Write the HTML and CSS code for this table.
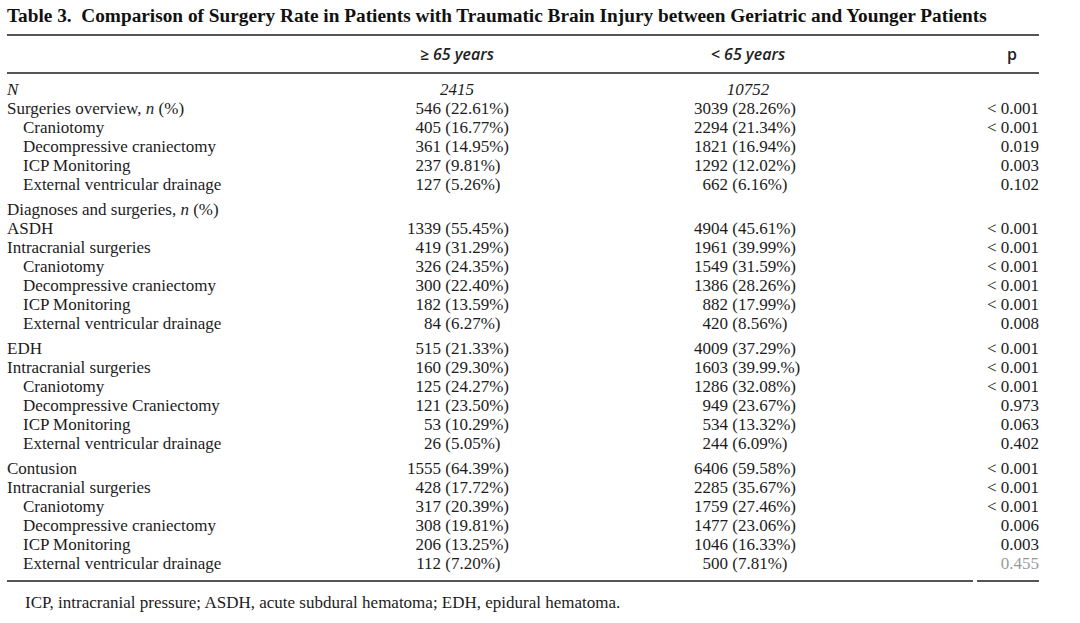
FILE: index.html
```html
<!DOCTYPE html>
<html>
<head>
<meta charset="utf-8">
<link rel="stylesheet" href="styles.css">
</head>
<body>
<div class="page">
  <h1 class="title">Table 3.&nbsp; Comparison of Surgery Rate in Patients with Traumatic Brain Injury between Geriatric and Younger Patients</h1>
  <table class="tbl">
    <colgroup>
      <col class="c-label"><col class="c-old"><col class="c-young"><col class="c-p">
    </colgroup>
    <thead>
      <tr>
        <th></th>
        <th class="hd">&ge; 65 years</th>
        <th class="hd">&lt; 65 years</th>
        <th class="hd-p">p</th>
      </tr>
    </thead>
    <tbody>
      <tr class="first">
        <td class="lbl"><i>N</i></td>
        <td class="ctr"><i>2415</i></td>
        <td class="ctr"><i>10752</i></td>
        <td class="pv"></td>
      </tr>
      <tr><td class="lbl">Surgeries overview, <i>n</i> (%)</td><td class="v1"><span class="n">546</span> (22.61%)</td><td class="v2"><span class="n">3039</span> (28.26%)</td><td class="pv">&lt; 0.001</td></tr>
      <tr><td class="lbl ind">Craniotomy</td><td class="v1"><span class="n">405</span> (16.77%)</td><td class="v2"><span class="n">2294</span> (21.34%)</td><td class="pv">&lt; 0.001</td></tr>
      <tr><td class="lbl ind">Decompressive craniectomy</td><td class="v1"><span class="n">361</span> (14.95%)</td><td class="v2"><span class="n">1821</span> (16.94%)</td><td class="pv">0.019</td></tr>
      <tr><td class="lbl ind">ICP Monitoring</td><td class="v1"><span class="n">237</span> (9.81%)</td><td class="v2"><span class="n">1292</span> (12.02%)</td><td class="pv">0.003</td></tr>
      <tr><td class="lbl ind">External ventricular drainage</td><td class="v1"><span class="n">127</span> (5.26%)</td><td class="v2"><span class="n">662</span> (6.16%)</td><td class="pv">0.102</td></tr>

      <tr class="gs"><td class="lbl">Diagnoses and surgeries, <i>n</i> (%)</td><td></td><td></td><td class="pv"></td></tr>
      <tr><td class="lbl">ASDH</td><td class="v1"><span class="n">1339</span> (55.45%)</td><td class="v2"><span class="n">4904</span> (45.61%)</td><td class="pv">&lt; 0.001</td></tr>
      <tr><td class="lbl">Intracranial surgeries</td><td class="v1"><span class="n">419</span> (31.29%)</td><td class="v2"><span class="n">1961</span> (39.99%)</td><td class="pv">&lt; 0.001</td></tr>
      <tr><td class="lbl ind">Craniotomy</td><td class="v1"><span class="n">326</span> (24.35%)</td><td class="v2"><span class="n">1549</span> (31.59%)</td><td class="pv">&lt; 0.001</td></tr>
      <tr><td class="lbl ind">Decompressive craniectomy</td><td class="v1"><span class="n">300</span> (22.40%)</td><td class="v2"><span class="n">1386</span> (28.26%)</td><td class="pv">&lt; 0.001</td></tr>
      <tr><td class="lbl ind">ICP Monitoring</td><td class="v1"><span class="n">182</span> (13.59%)</td><td class="v2"><span class="n">882</span> (17.99%)</td><td class="pv">&lt; 0.001</td></tr>
      <tr><td class="lbl ind">External ventricular drainage</td><td class="v1"><span class="n">84</span> (6.27%)</td><td class="v2"><span class="n">420</span> (8.56%)</td><td class="pv">0.008</td></tr>

      <tr class="gs"><td class="lbl">EDH</td><td class="v1"><span class="n">515</span> (21.33%)</td><td class="v2"><span class="n">4009</span> (37.29%)</td><td class="pv">&lt; 0.001</td></tr>
      <tr><td class="lbl">Intracranial surgeries</td><td class="v1"><span class="n">160</span> (29.30%)</td><td class="v2"><span class="n">1603</span> (39.99.%)</td><td class="pv">&lt; 0.001</td></tr>
      <tr><td class="lbl ind">Craniotomy</td><td class="v1"><span class="n">125</span> (24.27%)</td><td class="v2"><span class="n">1286</span> (32.08%)</td><td class="pv">&lt; 0.001</td></tr>
      <tr><td class="lbl ind">Decompressive Craniectomy</td><td class="v1"><span class="n">121</span> (23.50%)</td><td class="v2"><span class="n">949</span> (23.67%)</td><td class="pv">0.973</td></tr>
      <tr><td class="lbl ind">ICP Monitoring</td><td class="v1"><span class="n">53</span> (10.29%)</td><td class="v2"><span class="n">534</span> (13.32%)</td><td class="pv">0.063</td></tr>
      <tr><td class="lbl ind">External ventricular drainage</td><td class="v1"><span class="n">26</span> (5.05%)</td><td class="v2"><span class="n">244</span> (6.09%)</td><td class="pv">0.402</td></tr>

      <tr class="gs"><td class="lbl">Contusion</td><td class="v1"><span class="n">1555</span> (64.39%)</td><td class="v2"><span class="n">6406</span> (59.58%)</td><td class="pv">&lt; 0.001</td></tr>
      <tr><td class="lbl">Intracranial surgeries</td><td class="v1"><span class="n">428</span> (17.72%)</td><td class="v2"><span class="n">2285</span> (35.67%)</td><td class="pv">&lt; 0.001</td></tr>
      <tr><td class="lbl ind">Craniotomy</td><td class="v1"><span class="n">317</span> (20.39%)</td><td class="v2"><span class="n">1759</span> (27.46%)</td><td class="pv">&lt; 0.001</td></tr>
      <tr><td class="lbl ind">Decompressive craniectomy</td><td class="v1"><span class="n">308</span> (19.81%)</td><td class="v2"><span class="n">1477</span> (23.06%)</td><td class="pv">0.006</td></tr>
      <tr><td class="lbl ind">ICP Monitoring</td><td class="v1"><span class="n">206</span> (13.25%)</td><td class="v2"><span class="n">1046</span> (16.33%)</td><td class="pv">0.003</td></tr>
      <tr class="last"><td class="lbl ind">External ventricular drainage</td><td class="v1"><span class="n">112</span> (7.20%)</td><td class="v2"><span class="n">500</span> (7.81%)</td><td class="pv faint">0.455</td></tr>
    </tbody>
  </table>
  <div class="bottom-rule"><span class="seg-main"></span><span class="seg-p"></span></div>
  <p class="note">ICP, intracranial pressure; ASDH, acute subdural hematoma; EDH, epidural hematoma.</p>
</div>
</body>
</html>
```
FILE: styles.css
```css
html, body {
  margin: 0;
  padding: 0;
  background: #ffffff;
}
.page {
  width: 1032px;
  padding: 5px 0 0 7px;
  color: #1c1c1c;
  font-family: "Liberation Serif", "Times New Roman", serif;
}
.title {
  margin: 0;
  font-size: 19.3px;
  line-height: 22px;
  font-weight: 700;
  color: #111;
  white-space: nowrap;
}
.tbl {
  margin-top: 7px;
  width: 1032px;
  border-collapse: collapse;
  table-layout: fixed;
  border-top: 2px solid #555;
  font-size: 17px;
}
.c-label { width: 373px; }
.c-old { width: 154px; }
.c-young { width: 428px; }
.c-p { width: 77px; }
.tbl thead th {
  height: 36px;
  padding: 0;
  border-bottom: 2px solid #555;
  font-family: "Open Sans", "DejaVu Sans", sans-serif;
  font-size: 16px;
  font-weight: 600;
  color: #222;
  vertical-align: middle;
}
.hd {
  text-align: center;
  font-style: italic;
}
.hd-p {
  text-align: right;
  padding-right: 22px !important;
  font-weight: 600;
}
.tbl td {
  padding: 0;
  height: 19px;
  line-height: 19px;
  white-space: nowrap;
  vertical-align: middle;
}
.tbl tr.first td {
  padding-top: 6px;
}
.tbl tr.gs td {
  padding-top: 6px;
}
.lbl { text-align: left; }
.ind { padding-left: 16px !important; }
.ctr { text-align: center; }
.n {
  display: inline-block;
  width: 40px;
  text-align: right;
}
.v1 { padding-left: 21px !important; }
.v2 { padding-left: 154px !important; }
.pv { text-align: right; }
.faint { color: #9a9a9a; }
.bottom-rule {
  display: flex;
  gap: 4px;
  margin-top: 7px;
  height: 2px;
}
.seg-main {
  flex: 1;
  background: #555;
}
.seg-p {
  width: 62px;
  background: #555;
}
.note {
  margin: 11px 0 0 18px;
  font-size: 17px;
  line-height: 19px;
}
```
